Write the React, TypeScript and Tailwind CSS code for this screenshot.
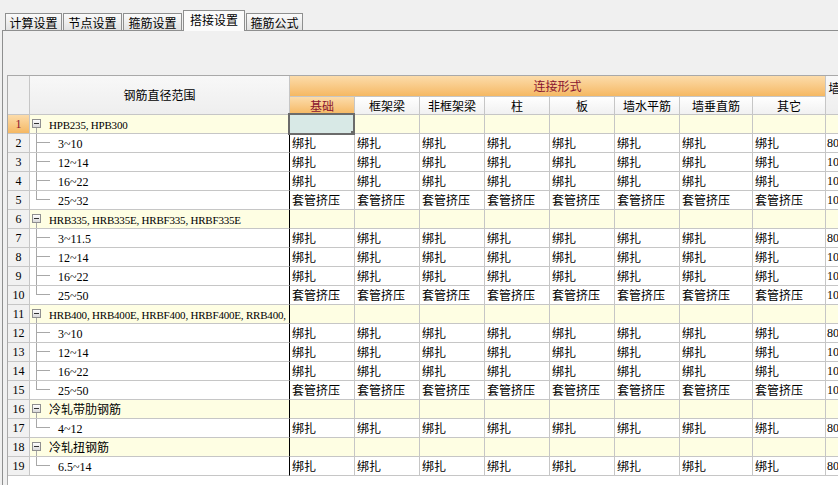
import React from "react";

type Row =
  | { kind: "group"; name: string; latin?: boolean }
  | { kind: "item"; range: string; joint: string; len: string; last?: boolean };

const TABS = ["计算设置", "节点设置", "箍筋设置", "搭接设置", "箍筋公式"];
const TAB_W = ["w-[57px]", "w-[59px]", "w-[59px]", "w-[62px]", "w-[57px]"];
const ACTIVE_TAB = 3;

const JOINT_COLS = ["基础", "框架梁", "非框架梁", "柱", "板", "墙水平筋", "墙垂直筋", "其它"];

const COLS =
  "grid grid-cols-[22px_260px_65px_65px_65px_65px_65px_65px_73px_73px_66px]";

const rows: Row[] = [
  { kind: "group", name: "HPB235, HPB300", latin: true },
  { kind: "item", range: "3~10", joint: "绑扎", len: "8000" },
  { kind: "item", range: "12~14", joint: "绑扎", len: "10000" },
  { kind: "item", range: "16~22", joint: "绑扎", len: "10000" },
  { kind: "item", range: "25~32", joint: "套管挤压", len: "10000", last: true },
  { kind: "group", name: "HRB335, HRB335E, HRBF335, HRBF335E", latin: true },
  { kind: "item", range: "3~11.5", joint: "绑扎", len: "8000" },
  { kind: "item", range: "12~14", joint: "绑扎", len: "10000" },
  { kind: "item", range: "16~22", joint: "绑扎", len: "10000" },
  { kind: "item", range: "25~50", joint: "套管挤压", len: "10000", last: true },
  { kind: "group", name: "HRB400, HRB400E, HRBF400, HRBF400E, RRB400,", latin: true },
  { kind: "item", range: "3~10", joint: "绑扎", len: "8000" },
  { kind: "item", range: "12~14", joint: "绑扎", len: "10000" },
  { kind: "item", range: "16~22", joint: "绑扎", len: "10000" },
  { kind: "item", range: "25~50", joint: "套管挤压", len: "10000", last: true },
  { kind: "group", name: "冷轧带肋钢筋" },
  { kind: "item", range: "4~12", joint: "绑扎", len: "8000", last: true },
  { kind: "group", name: "冷轧扭钢筋" },
  { kind: "item", range: "6.5~14", joint: "绑扎", len: "8000", last: true },
];

const line = "border-r border-b border-[#c6c6c6]";
const serif = "font-['Liberation_Serif','Noto_Sans_CJK_SC',serif]";

function NameCell({ row }: { row: Row }) {
  if (row.kind === "group") {
    return (
      <div className={`relative h-[19px] border-b border-r border-[#c6c6c6] border-r-black bg-[#fefee3] pl-[19px] leading-[18px] whitespace-nowrap overflow-hidden`}>
        <span className="absolute left-[2px] top-[4px] w-[9px] h-[9px] border border-[#8f8f8f] bg-gradient-to-b from-white to-[#d9d9d9] flex items-center justify-center">
          <span className="w-[5px] h-px bg-[#333]" />
        </span>
        <span className="absolute left-[6px] top-[13px] -bottom-px w-px bg-[#a8a8a8]" />
        {row.latin ? (
          <span className={`${serif} text-[11px] tracking-[-0.2px]`}>{row.name}</span>
        ) : (
          <span className="text-[12px]">{row.name}</span>
        )}
      </div>
    );
  }
  return (
    <div className={`relative h-[19px] border-b border-r border-[#c6c6c6] border-r-black bg-white pl-[28px] leading-[18px] whitespace-nowrap overflow-hidden`}>
      <span className={`absolute left-[6px] top-0 w-px bg-[#a8a8a8] ${row.last ? "h-[9px]" : "-bottom-px"}`} />
      <span className="absolute left-[6px] top-[8px] w-[14px] h-px bg-[#a8a8a8]" />
      <span className={`${serif} text-[12px]`}>{row.range}</span>
    </div>
  );
}

function DataRow({ row, n }: { row: Row; n: number }) {
  const isGroup = row.kind === "group";
  const bg = isGroup ? "bg-[#fefee3]" : "bg-white";
  return (
    <>
      <div
        className={`${line} h-[19px] leading-[18px] text-center ${serif} text-[12px] ${
          n === 1 ? "bg-gradient-to-b from-[#fcdcaa] to-[#f5b862] text-[#8a1530]" : "bg-[#f1f1f1] text-black"
        }`}
      >
        {n}
      </div>
      <NameCell row={row} />
      {JOINT_COLS.map((c, i) => (
        <div key={c} className={`${line} h-[19px] leading-[18px] pl-[2px] text-[12px] whitespace-nowrap overflow-hidden ${bg} ${n === 1 && i === 0 ? "relative overflow-visible !bg-[#d8e9e6]" : ""}`}>
          {row.kind === "item" ? row.joint : ""}
          {n === 1 && i === 0 && (
            <span className="absolute -left-[2px] -top-[2px] w-[67px] h-[22px] border-2 border-[#6b6b6b] z-10">
              <span className="absolute -right-[2px] -bottom-[2px] w-[4px] h-[4px] bg-[#6b6b6b]" />
            </span>
          )}
        </div>
      ))}
      <div className={`${line} h-[19px] leading-[18px] pl-[1px] ${serif} text-[12px] whitespace-nowrap overflow-hidden ${bg}`}>
        {row.kind === "item" ? row.len : ""}
      </div>
    </>
  );
}

export default function App() {
  return (
    <div className="w-[838px] h-[485px] overflow-hidden bg-[#f0f0f0] flex flex-col text-black font-['Noto_Sans_CJK_SC','Liberation_Sans',sans-serif] text-[12px]">
      {/* tabs */}
      <div className="h-[30px] shrink-0 flex items-end gap-px pl-[5px]">
        {TABS.map((t, i) =>
          i === ACTIVE_TAB ? (
            <div
              key={t}
              className={`${TAB_W[i]} relative z-10 h-[21px] -mb-px border border-b-0 border-[#8e8f8f] bg-[#fbfbfb] flex items-center justify-center pb-[2px] text-[12px]`}
            >
              {t}
            </div>
          ) : (
            <div
              key={t}
              className={`${TAB_W[i]} h-[17px] border border-b-0 border-[#8e8f8f] bg-gradient-to-b from-[#fafafa] to-[#e2e2e2] flex items-center justify-center pt-[1px] text-[12px]`}
            >
              {t}
            </div>
          )
        )}
      </div>

      {/* panel */}
      <div className="flex-1 min-h-0 ml-[2px] border-l border-t border-[#8e8f8f] bg-[#f0f0f0] pt-[44px] pl-[4px] flex flex-col">
        <div className="flex-1 min-h-0 border-l border-t border-[#a9a9a9] bg-white overflow-hidden">
          {/* header */}
          <div className={`${COLS} grid-rows-[21px_18px] w-max`}>
            <div className={`${line} row-span-2 bg-[#f1f1f1]`} />
            <div className={`${line} row-span-2 bg-gradient-to-b from-[#f8f8f8] to-[#eeeeee] flex items-center justify-center text-[12px]`}>
              钢筋直径范围
            </div>
            <div className={`${line} col-span-8 bg-gradient-to-b from-[#fcdcaa] to-[#f5b862] flex items-center justify-center text-[#8a1530] text-[12px]`}>
              连接形式
            </div>
            <div className={`${line} row-span-2 bg-gradient-to-b from-[#f8f8f8] to-[#eeeeee] flex items-center justify-center text-center leading-[14px] text-[12px]`}>
              墙柱垂直筋定尺
            </div>
            {JOINT_COLS.map((c, i) => (
              <div
                key={c}
                className={`${line} flex items-center justify-center text-[12px] ${
                  i === 0
                    ? "bg-gradient-to-b from-[#fcdcaa] to-[#f5b862] text-[#8a1530]"
                    : "bg-gradient-to-b from-white to-[#f1f1f1]"
                }`}
              >
                {c}
              </div>
            ))}
          </div>

          {/* body */}
          <div className={`${COLS} w-max`}>
            {rows.map((r, i) => (
              <DataRow key={i} row={r} n={i + 1} />
            ))}
          </div>
        </div>
      </div>
    </div>
  );
}
